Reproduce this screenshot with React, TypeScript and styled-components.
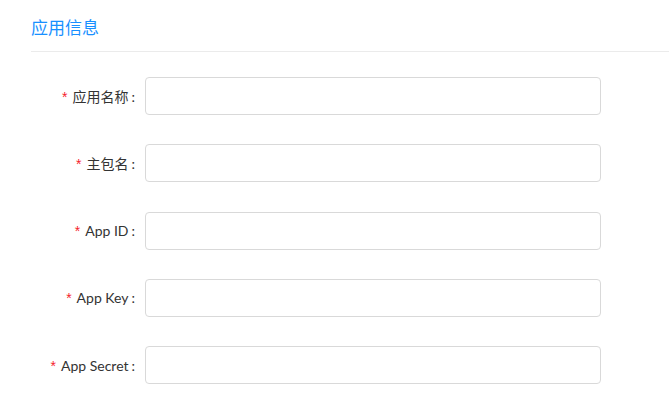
import React from "react";
import styled, { createGlobalStyle } from "styled-components";

const Global = createGlobalStyle`
  html, body { margin: 0; padding: 0; background: #fff; }
  body { font-family: Lato, "Noto Sans CJK SC", sans-serif; }
`;

const Page = styled.div`
  width: 669px;
  padding-left: 31px;
  box-sizing: border-box;
`;

const Header = styled.div`
  height: 52px;
  border-bottom: 1px solid #ebebeb;
  display: flex;
  align-items: center;
  box-sizing: border-box;
  padding-top: 3px;
`;

const Title = styled.h2`
  margin: 0;
  font-family: "Noto Sans CJK SC", sans-serif;
  font-size: 17px;
  font-weight: 400;
  color: #1890ff;
  line-height: 20px;
`;

const Form = styled.form`
  display: flex;
  flex-direction: column;
  gap: 29.25px;
  padding-top: 25px;
`;

const Row = styled.div`
  display: flex;
  align-items: center;
`;

const Label = styled.label`
  width: 104px;
  padding-right: 10px;
  text-align: right;
  font-size: 14px;
  color: #333;
  white-space: nowrap;
`;

const Star = styled.span`
  color: #f5222d;
  margin-right: 5px;
  font-family: "Liberation Sans", sans-serif;
  font-size: 14px;
`;

const Colon = styled.span`
  margin-left: 3px;
`;

const Input = styled.input`
  width: 456px;
  height: 38px;
  box-sizing: border-box;
  border: 1px solid #d9d9d9;
  border-radius: 4px;
  outline: none;
  padding: 0 10px;
  font-size: 13px;
`;

const fields = ["应用名称", "主包名", "App ID", "App Key", "App Secret"];

export default function App() {
  return (
    <>
      <Global />
      <Page>
        <Header>
          <Title>应用信息</Title>
        </Header>
        <Form>
          {fields.map((f) => (
            <Row key={f}>
              <Label>
                <Star>*</Star>
                {f}
                <Colon>:</Colon>
              </Label>
              <Input />
            </Row>
          ))}
        </Form>
      </Page>
    </>
  );
}
